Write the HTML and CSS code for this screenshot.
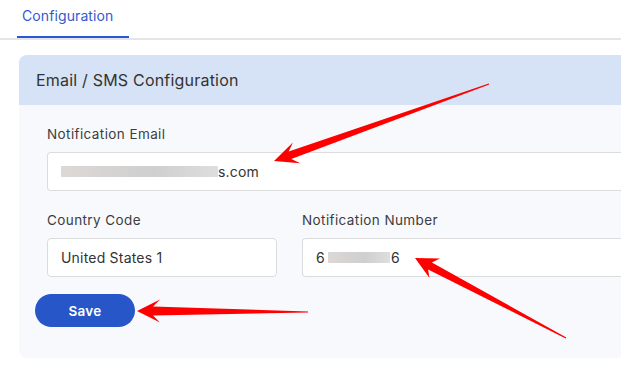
FILE: index.html
```html
<!DOCTYPE html>
<html lang="en">
  <head>
    <meta charset="UTF-8" />
    <meta name="viewport" content="width=device-width, initial-scale=1.0" />
    <title>Configuration</title>
    <link rel="stylesheet" href="styles.css">
  </head>
  <body>
    <div class="tabs">
      <div class="tab active">Configuration</div>
    </div>

    <div class="card">
      <div class="card-header">Email / SMS Configuration</div>
      <div class="card-body">
        <div class="field">
          <label>Notification Email</label>
          <div class="input"><span class="smudge smudge-email"></span>s.com</div>
        </div>

        <div class="row">
          <div class="field">
            <label>Country Code</label>
            <div class="input">United States 1</div>
          </div>
          <div class="field">
            <label>Notification Number</label>
            <div class="input">6<span class="smudge smudge-phone"></span>6</div>
          </div>
        </div>

        <button class="save-button">Save</button>
      </div>
    </div>

    <!-- annotation arrows drawn over the page -->
    <svg class="arrows" width="621" height="381" viewBox="0 0 621 381">
      <polygon points="489.2,84.6 291.3,159.1 300.3,163.3 274,161 292.9,142.5 288.7,151.5 488.8,83.4" />
      <polygon points="566.3,337.5 431.9,262.5 440,258.5 415,258 429.5,278 428.1,269.5 565.7,338.5" />
      <polygon points="308,312.6 153,315.5 160,322.5 137,311 160,299.5 153,306.5 308,311.4" />
    </svg>
  </body>
</html>
```

FILE: styles.css
```css
body {
  font-family: Inter, "Noto Sans", sans-serif;
  background-color: #fff;
  color: #3a3a3a;
  margin: 0;
  overflow: hidden;
}

.tabs {
  height: 38px;
  border-bottom: 2px solid #e3e5e9;
  display: flex;
}

.tab {
  margin-left: 17px;
  padding: 0 16px 0 5px;
  height: 38px;
  line-height: 32px;
  font-size: 14px;
  letter-spacing: 0.1px;
  color: #3559cc;
  box-sizing: border-box;
}

.tab.active {
  border-bottom: 2px solid #2a57d3;
  margin-bottom: -1px;
}

.card {
  margin: 15px 0 0 19px;
  border-radius: 8px 0 0 8px;
  overflow: hidden;
  background-color: #f8f9fd;
}

.card-header {
  height: 50px;
  line-height: 50px;
  padding-left: 17px;
  background-color: #d6e2f5;
  font-size: 16px;
  letter-spacing: 0.2px;
  color: #333;
}

.card-body {
  padding: 21px 0 31px 28px;
}

.field label {
  display: block;
  height: 16px;
  line-height: 16px;
  font-size: 13.5px;
  letter-spacing: 0.4px;
  color: #3d3d3d;
  margin-bottom: 10px;
}

.input {
  height: 39px;
  box-sizing: border-box;
  border: 1px solid #dcdcdc;
  border-right: none;
  border-radius: 4px 0 0 4px;
  background-color: #fff;
  padding-left: 13px;
  display: flex;
  align-items: center;
  font-size: 14px;
  letter-spacing: 0.2px;
  color: #333;
}

.row {
  display: grid;
  grid-template-columns: 230px 1fr;
  gap: 25px;
  margin-top: 21px;
}

.row .field:first-child .input {
  border-right: 1px solid #dcdcdc;
  border-radius: 4px;
}

.smudge {
  display: inline-block;
  height: 11px;
  background: linear-gradient(90deg, #dcd8d6, #cfcfcf 60%, #dedede);
  filter: blur(0.6px);
}

.smudge-email {
  width: 157px;
}

.smudge-phone {
  width: 62px;
  margin: 0 1px 0 3px;
}

.save-button {
  margin: 17px 0 0 -12px;
  width: 100px;
  height: 33px;
  border: none;
  border-radius: 17px;
  background-color: #2756c8;
  color: #fff;
  font-family: inherit;
  font-size: 13.5px;
  font-weight: 600;
  letter-spacing: 0.3px;
}

.arrows {
  position: absolute;
  top: 0;
  left: 0;
  pointer-events: none;
}

.arrows polygon {
  fill: #ff0000;
}
```
